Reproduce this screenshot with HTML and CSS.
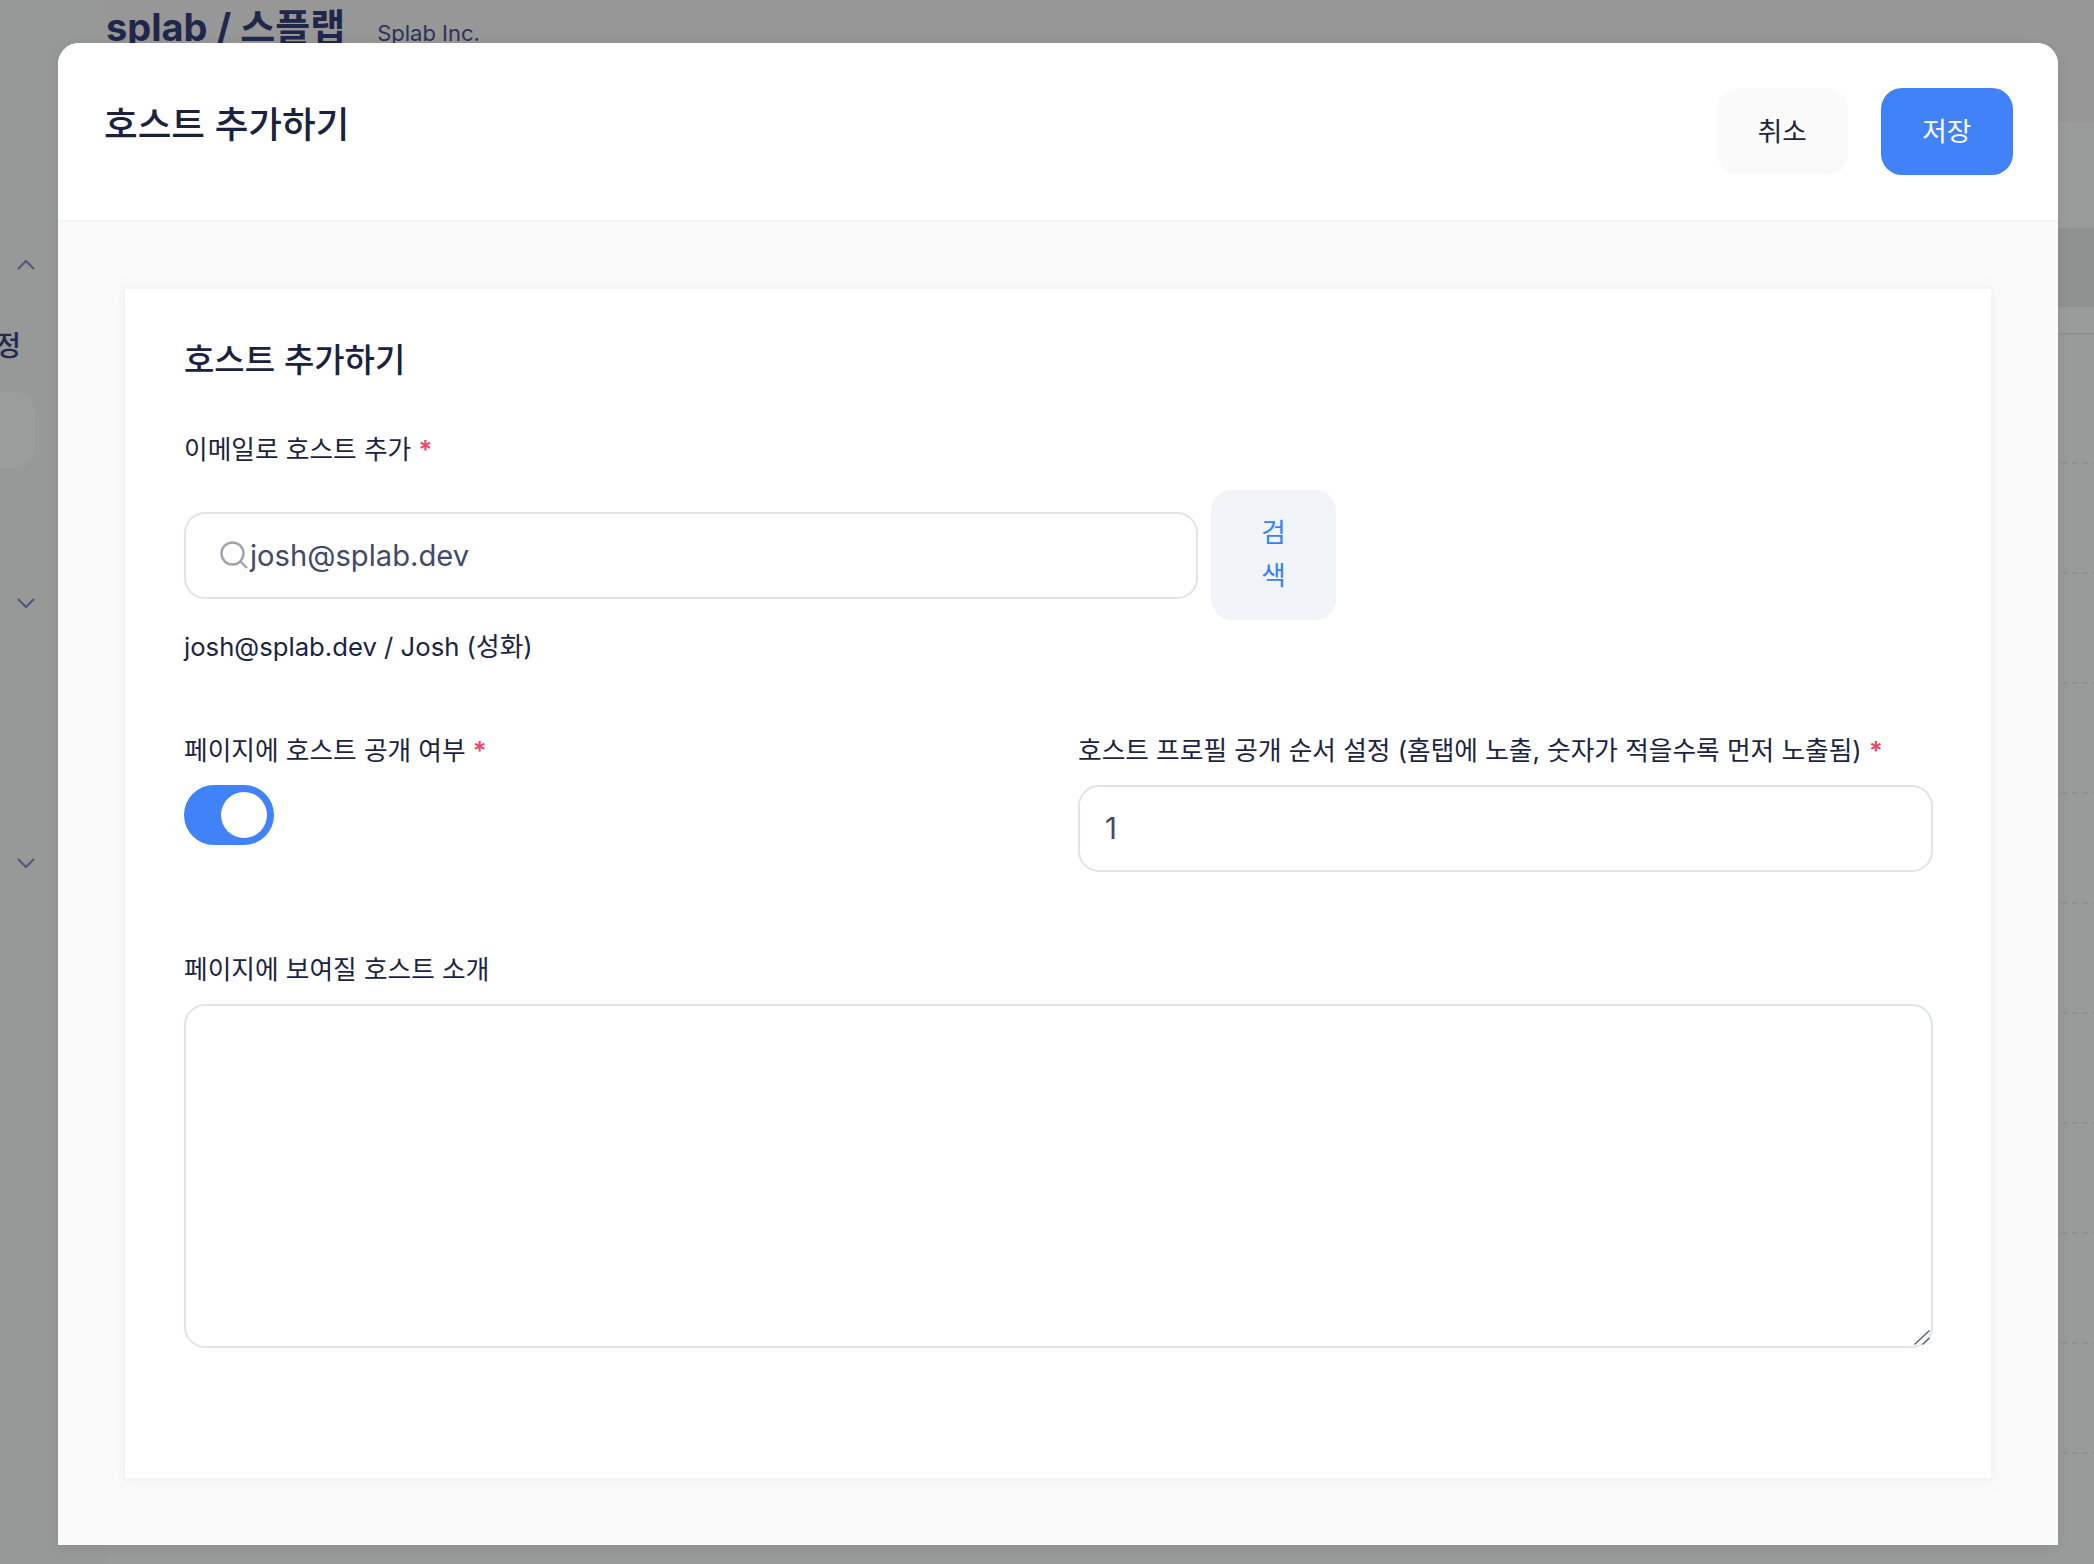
FILE: index.html
```html
<!DOCTYPE html>
<html lang="ko">
<head>
<meta charset="utf-8">
<title>호스트 추가하기</title>
<link rel="stylesheet" href="styles.css">
</head>
<body>
<div class="app">
  <aside class="side">
    <svg class="chev chev-up" viewBox="0 0 20 12"><path d="M2 11 L10 3 L18 11"/></svg>
    <div class="side-label"><span>정</span></div>
    <div class="side-item"></div>
    <svg class="chev chev-a" viewBox="0 0 20 12"><path d="M2 2 L10 10 L18 2"/></svg>
    <svg class="chev chev-b" viewBox="0 0 20 12"><path d="M2 2 L10 10 L18 2"/></svg>
  </aside>
  <main class="main">
    <header class="topbar">
      <span class="brand">splab / 스플랩</span>
      <span class="company">Splab Inc.</span>
    </header>
    <section class="panel">
      <div class="panel-band"></div>
    </section>
    <div class="row row-first"></div>
    <div class="row"></div>
    <div class="row"></div>
    <div class="row"></div>
    <div class="row"></div>
    <div class="row"></div>
    <div class="row"></div>
    <div class="row"></div>
    <div class="row"></div>
    <div class="row"></div>
  </main>
</div>

<div class="modal">
  <header class="modal-head">
    <h1 class="modal-title">호스트 추가하기</h1>
    <div class="modal-actions">
      <button class="btn btn-cancel" type="button">취소</button>
      <button class="btn btn-save" type="button">저장</button>
    </div>
  </header>
  <div class="modal-body">
    <section class="card">
      <h2 class="card-title">호스트 추가하기</h2>
      <div class="label label-email">이메일로 호스트 추가 <span class="req">*</span></div>
      <div class="search-row">
        <div class="field field-search">
          <svg class="search-icon" viewBox="0 0 28 28"><circle cx="12.5" cy="12.5" r="11"/><path d="M20.5 20.5 L27 27"/></svg>
          <span class="field-text">josh@splab.dev</span>
        </div>
        <button class="btn-search" type="button">검색</button>
      </div>
      <div class="result">josh@splab.dev / Josh (성화)</div>
      <div class="two-col">
        <div class="col">
          <div class="label">페이지에 호스트 공개 여부 <span class="req">*</span></div>
          <div class="toggle"><span class="knob"></span></div>
        </div>
        <div class="col">
          <div class="label">호스트 프로필 공개 순서 설정 (홈탭에 노출, 숫자가 적을수록 먼저 노출됨) <span class="req">*</span></div>
          <div class="field field-num"><span class="field-text">1</span></div>
        </div>
      </div>
      <div class="label label-intro">페이지에 보여질 호스트 소개</div>
      <div class="intro-wrap">
        <textarea class="intro" aria-label="페이지에 보여질 호스트 소개"></textarea>
        <svg class="grip" viewBox="0 0 16 15"><path d="M0.5 14.5 L15.5 0.5 M8.5 14.5 L15.5 8"/></svg>
      </div>
    </section>
  </div>
</div>
</body>
</html>
```

FILE: styles.css
```css
* { box-sizing: border-box; }
html, body { margin: 0; height: 1564px; overflow: hidden; }
body {
  position: relative;
  background: #999a9a;
  font-family: Inter, "Noto Sans CJK KR", sans-serif;
  color: #1d2440;
}

/* dimmed page behind the modal */
.app { display: flex; height: 1564px; overflow: hidden; }
.side { width: 106px; flex: none; display: flex; flex-direction: column; background: #979898; }
.chev { width: 20px; height: 12px; margin-left: 16px; flex: none; }
.chev path { fill: none; stroke: #4c5678; stroke-width: 2; }
.chev-up { margin-top: 258px; }
.side-label { width: 21px; height: 40px; margin-top: 56px; display: flex; justify-content: flex-end; overflow: hidden; font-size: 28px; line-height: 40px; font-weight: 500; color: #222b4e; }
.side-label span { flex: none; }
.side-item { width: 35px; height: 76px; margin-top: 26px; background: #9b9d9c; border-radius: 0 20px 20px 0; }
.chev-a { margin-top: 129px; }
.chev-b { margin-top: 248px; }

.main { flex: 1; min-width: 0; }
.topbar { height: 124px; background: #979797; border-bottom: 1px solid #9d9e9e; display: flex; align-items: flex-start; gap: 32px; }
.brand { font-size: 38px; font-weight: 700; line-height: 50px; margin-top: 2px; color: #1f274b; white-space: nowrap; }
.company { font-size: 22px; line-height: 28px; margin-top: 19px; color: #2b3356; white-space: nowrap; }
.panel { height: 211px; padding-top: 104px; background: #9a9b9b; border-bottom: 2px solid #909191; }
.panel-band { height: 79px; background: #8f9291; }
.row { height: 110px; background-image: linear-gradient(90deg, #8f9090 6px, transparent 6px); background-size: 10px 2px; background-position: 6px 100%; background-repeat: repeat-x; }
.row-first { height: 129px; }

/* modal */
.modal {
  position: absolute;
  left: 58px;
  top: 43px;
  width: 2000px;
  height: 1502px;
  display: flex;
  flex-direction: column;
  background: #fafafa;
  border-radius: 21px 21px 0 0;
  box-shadow: 0 3px 14px rgba(0, 0, 0, .07);
}
.modal-head {
  height: 179px;
  flex: none;
  display: flex;
  justify-content: space-between;
  align-items: flex-start;
  padding: 45px 45.5px 0 46px;
  background: #fff;
  border-bottom: 2px solid #f2f4f7;
  border-radius: 21px 21px 0 0;
}
.modal-title { margin: 13px 0 0; font-size: 36.6px; line-height: 48px; font-weight: 500; color: #1b2240; }
.modal-actions { display: flex; gap: 33px; }
.btn {
  width: 131.5px;
  height: 87px;
  border: 0;
  border-radius: 21px;
  font: 400 26.7px/36px Inter, "Noto Sans CJK KR", sans-serif;
  padding: 0 0 2px;
}
.btn-cancel { background: #fafafa; color: #1d2440; }
.btn-save { background: #4182f9; color: #fff; }

.modal-body { flex: 1; padding: 67px; min-height: 0; }
.card {
  height: 100%;
  padding: 51px 58px 0 59px;
  background: #fff;
  box-shadow: 0 0 0 2px #f2f4f8, 0 2px 10px rgba(225, 230, 240, .5);
}
.card-title { margin: 0; font-size: 33px; line-height: 40px; font-weight: 500; color: #1b2240; }
.label { font-size: 25.7px; line-height: 32px; color: #1d2440; white-space: nowrap; }
.req { color: #e8476a; font-weight: 600; }
.label-email { margin-top: 54px; }
.search-row { margin-top: 24px; display: flex; align-items: center; gap: 13px; }
.field {
  height: 87px;
  display: flex;
  align-items: center;
  background: #fff;
  border: 2px solid #dfe3ec;
  border-radius: 21px;
  font-size: 29.2px;
  color: #424a6b;
}
.field-search { width: 1014px; padding-left: 34px; }
.search-icon { width: 28px; height: 28px; flex: none; margin-right: 2px; }
.search-icon circle, .search-icon path { fill: none; stroke: #9ea3ad; stroke-width: 2.4; }
.btn-search {
  width: 125px;
  height: 130px;
  flex: none;
  padding: 0 46px 2px;
  border: 0;
  border-radius: 21px;
  background: #f1f4f8;
  color: #3b7ff5;
  font: 400 26.7px/43px Inter, "Noto Sans CJK KR", sans-serif;
}
.result { margin-top: 11px; font-size: 25.7px; line-height: 32px; color: #1d2440; }
.two-col { margin-top: 72px; display: grid; grid-template-columns: 853px 855px; column-gap: 41px; }
.col { display: flex; flex-direction: column; gap: 18px; align-items: flex-start; }
.toggle { width: 90px; height: 60px; padding: 7px 7px 7px 37px; background: #4182f9; border-radius: 30px; }
.knob { display: block; width: 46px; height: 46px; border-radius: 50%; background: #fff; }
.field-num { width: 100%; padding-left: 25px; }
.label-intro { margin-top: 82px; }
.intro-wrap { position: relative; margin-top: 18px; }
.intro {
  display: block;
  width: 100%;
  height: 344px;
  margin: 0;
  padding: 20px;
  background: #fff;
  border: 2px solid #dfe3ec;
  border-radius: 21px;
  resize: none;
  outline: 0;
}
.grip { position: absolute; right: 3px; bottom: 3px; width: 16px; height: 15px; }
.grip path { fill: none; stroke: #5a6078; stroke-width: 1.4; }
```
